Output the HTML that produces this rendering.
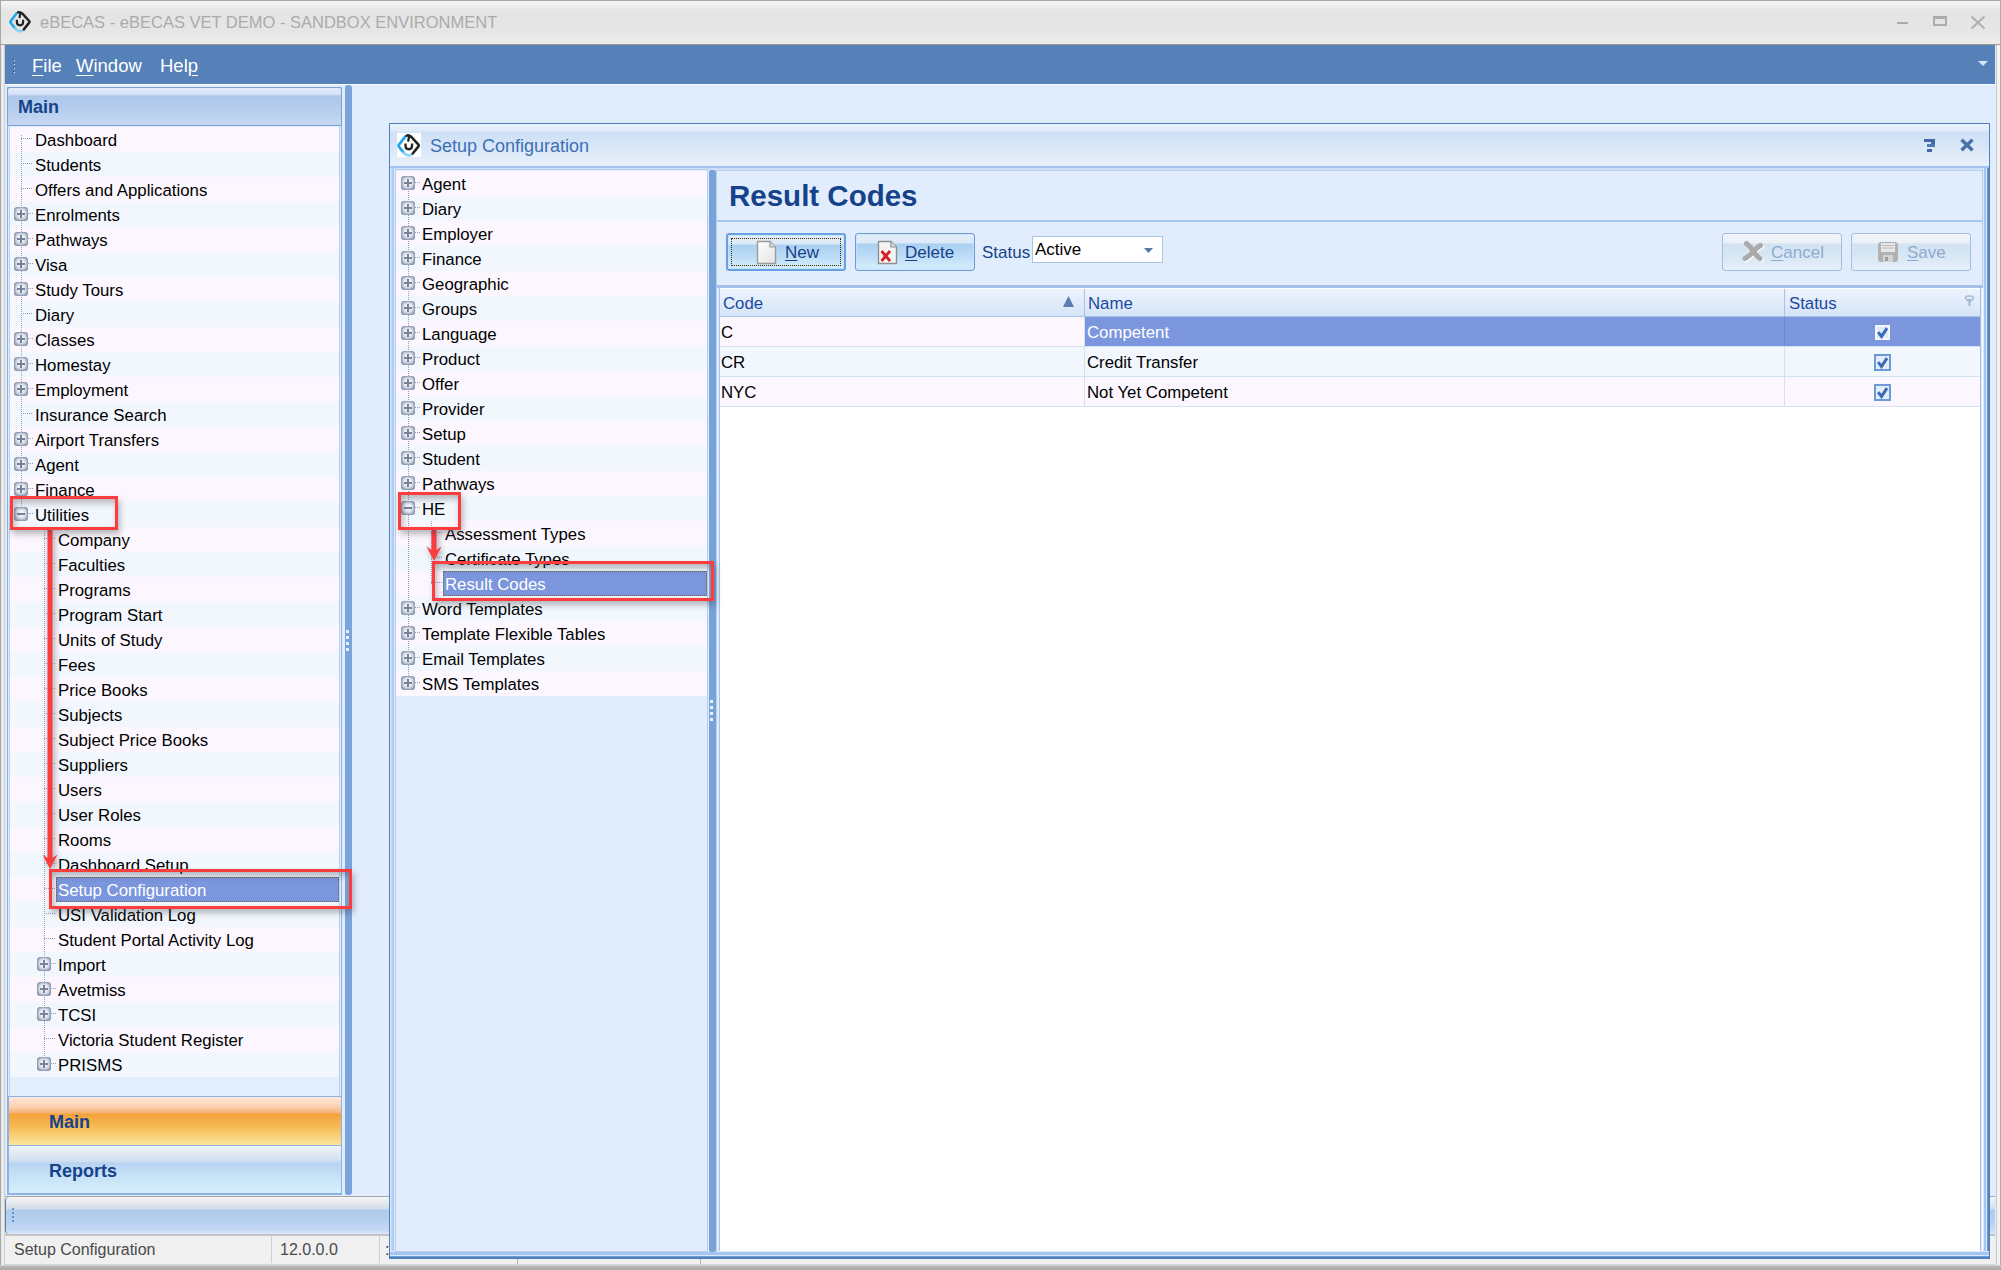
<!DOCTYPE html><html><head><meta charset="utf-8"><style>
html,body{margin:0;padding:0;width:2001px;height:1270px;overflow:hidden;font-family:"Liberation Sans", sans-serif;}
div{box-sizing:border-box}
</style></head><body>
<div style="position:absolute;left:0px;top:0px;width:2001px;height:1270px;background:#e1edfc"></div><div style="position:absolute;left:0px;top:0px;width:2001px;height:45px;background:linear-gradient(#f4f4f4,#e4e4e4 12px,#e6e6e6 30px,#ececec);border-top:1px solid #a9a9a9;box-sizing:border-box"></div><div style="position:absolute;left:0px;top:44px;width:2001px;height:1px;background:#a09a96"></div><div style="position:absolute;left:0px;top:0px;width:1px;height:1270px;background:#a8a8a8"></div><div style="position:absolute;left:1px;top:45px;width:3px;height:1225px;background:linear-gradient(to right,#dcdcdc,#f2f2f2 40%,#e6e6e6)"></div><div style="position:absolute;left:4px;top:45px;width:1px;height:1225px;background:#cfcfcf"></div><div style="position:absolute;left:1996px;top:45px;width:1px;height:1225px;background:#c8c8c8"></div><div style="position:absolute;left:1997px;top:45px;width:3px;height:1225px;background:#f2f2f2"></div><div style="position:absolute;left:2000px;top:0px;width:1px;height:1270px;background:#b0b0b0"></div><div style="position:absolute;left:0px;top:1265px;width:2001px;height:5px;background:linear-gradient(#d2d2d2,#b4b4b4 40%,#a9a9a9)"></div><svg style="position:absolute;left:6px;top:8px" width="28" height="28" viewBox="0 0 28 28">
<path d="M10.6 5.3 L4.6 13.2 Q4 14 4.6 14.8 L9.2 20.5" stroke="#1eaaea" stroke-width="2.6" fill="none" stroke-linecap="round"/>
<path d="M9.2 20.5 Q11.5 23.3 14 23.3 Q15.5 23.3 16.3 22.6" stroke="#86d0f4" stroke-width="2.4" fill="none" stroke-linecap="round"/>
<path d="M12 4.4 Q14 3.6 16.2 5.4 L23.2 13 Q23.9 13.8 23.2 14.6 L17.8 21.4" stroke="#222" stroke-width="2.5" fill="none" stroke-linecap="round"/>
<path d="M14.3 5.2 L13.6 9.2" stroke="#222" stroke-width="2.2" fill="none" stroke-linecap="round"/>
<path d="M10.9 11.8 V14 Q10.9 17.3 14 17.3 Q17.1 17.3 17.1 14 V11.8" stroke="#222" stroke-width="2.2" fill="none"/>
</svg><div style="position:absolute;left:40px;top:13px;font-size:16.5px;line-height:19px;color:#ababab;font-weight:normal;white-space:nowrap;">eBECAS - eBECAS VET DEMO - SANDBOX ENVIRONMENT</div><div style="position:absolute;left:1897px;top:22px;width:11px;height:2px;background:#a9a9a9"></div><div style="position:absolute;left:1933px;top:16px;width:14px;height:10px;border:2px solid #acacac;border-top-width:3px;box-sizing:border-box"></div><svg style="position:absolute;left:1970px;top:15px" width="16" height="15" viewBox="0 0 16 15"><path d="M1.5 1.5 L14.5 13.5 M14.5 1.5 L1.5 13.5" stroke="#b0b0b0" stroke-width="2.2"/></svg><div style="position:absolute;left:5px;top:45px;width:1990px;height:39px;background:#5580b8"></div><div style="position:absolute;left:5px;top:84px;width:1990px;height:1px;background:#f8fbff"></div><div style="position:absolute;left:14px;top:60px;width:1px;height:1px;background:#e9f0fa"></div><div style="position:absolute;left:13px;top:59px;width:1px;height:1px;background:#34598c"></div><div style="position:absolute;left:14px;top:64px;width:1px;height:1px;background:#e9f0fa"></div><div style="position:absolute;left:13px;top:63px;width:1px;height:1px;background:#34598c"></div><div style="position:absolute;left:14px;top:68px;width:1px;height:1px;background:#e9f0fa"></div><div style="position:absolute;left:13px;top:67px;width:1px;height:1px;background:#34598c"></div><div style="position:absolute;left:14px;top:72px;width:1px;height:1px;background:#e9f0fa"></div><div style="position:absolute;left:13px;top:71px;width:1px;height:1px;background:#34598c"></div><div style="position:absolute;left:32px;top:55px;font-size:18.5px;line-height:21px;color:#ffffff;font-weight:normal;white-space:nowrap;"><u style="text-decoration-thickness:1px;text-underline-offset:3px">F</u>ile</div><div style="position:absolute;left:76px;top:55px;font-size:18.5px;line-height:21px;color:#ffffff;font-weight:normal;white-space:nowrap;"><u style="text-decoration-thickness:1px;text-underline-offset:3px">W</u>indow</div><div style="position:absolute;left:160px;top:55px;font-size:18.5px;line-height:21px;color:#ffffff;font-weight:normal;white-space:nowrap;">Hel<u style="text-decoration-thickness:1px;text-underline-offset:3px">p</u></div><svg style="position:absolute;left:1978px;top:61px" width="10" height="6" viewBox="0 0 10 6"><path d="M0 0 L10 0 L5 5 Z" fill="#d6e4f7"/></svg><div style="position:absolute;left:7px;top:87px;width:335px;height:1108px;border:1px solid #8db2e3;background:#e3eefc"></div><div style="position:absolute;left:7px;top:87px;width:335px;height:39px;background:linear-gradient(#e4edf8 0px,#d5e3f5 6px,#adc7ea 8px,#b8cfee 24px,#c8daf1 38px);border:1px solid #7aa1d6;border-radius:3px 3px 0 0"></div><div style="position:absolute;left:18px;top:97px;font-size:18px;line-height:21px;color:#15428b;font-weight:bold;white-space:nowrap;">Main</div><div style="position:absolute;left:9px;top:126px;width:331px;height:970px;background:#e3eefc;border-left:1px solid #b9d1f0;border-right:1px solid #b9d1f0"></div><div style="position:absolute;left:10px;top:127px;width:329px;height:25px;background:#fcf7fe"></div><div style="position:absolute;left:10px;top:152px;width:329px;height:25px;background:#f2f7fe"></div><div style="position:absolute;left:10px;top:177px;width:329px;height:25px;background:#fcf7fe"></div><div style="position:absolute;left:10px;top:202px;width:329px;height:25px;background:#f2f7fe"></div><div style="position:absolute;left:10px;top:227px;width:329px;height:25px;background:#fcf7fe"></div><div style="position:absolute;left:10px;top:252px;width:329px;height:25px;background:#f2f7fe"></div><div style="position:absolute;left:10px;top:277px;width:329px;height:25px;background:#fcf7fe"></div><div style="position:absolute;left:10px;top:302px;width:329px;height:25px;background:#f2f7fe"></div><div style="position:absolute;left:10px;top:327px;width:329px;height:25px;background:#fcf7fe"></div><div style="position:absolute;left:10px;top:352px;width:329px;height:25px;background:#f2f7fe"></div><div style="position:absolute;left:10px;top:377px;width:329px;height:25px;background:#fcf7fe"></div><div style="position:absolute;left:10px;top:402px;width:329px;height:25px;background:#f2f7fe"></div><div style="position:absolute;left:10px;top:427px;width:329px;height:25px;background:#fcf7fe"></div><div style="position:absolute;left:10px;top:452px;width:329px;height:25px;background:#f2f7fe"></div><div style="position:absolute;left:10px;top:477px;width:329px;height:25px;background:#fcf7fe"></div><div style="position:absolute;left:10px;top:502px;width:329px;height:25px;background:#f2f7fe"></div><div style="position:absolute;left:10px;top:527px;width:329px;height:25px;background:#fcf7fe"></div><div style="position:absolute;left:10px;top:552px;width:329px;height:25px;background:#f2f7fe"></div><div style="position:absolute;left:10px;top:577px;width:329px;height:25px;background:#fcf7fe"></div><div style="position:absolute;left:10px;top:602px;width:329px;height:25px;background:#f2f7fe"></div><div style="position:absolute;left:10px;top:627px;width:329px;height:25px;background:#fcf7fe"></div><div style="position:absolute;left:10px;top:652px;width:329px;height:25px;background:#f2f7fe"></div><div style="position:absolute;left:10px;top:677px;width:329px;height:25px;background:#fcf7fe"></div><div style="position:absolute;left:10px;top:702px;width:329px;height:25px;background:#f2f7fe"></div><div style="position:absolute;left:10px;top:727px;width:329px;height:25px;background:#fcf7fe"></div><div style="position:absolute;left:10px;top:752px;width:329px;height:25px;background:#f2f7fe"></div><div style="position:absolute;left:10px;top:777px;width:329px;height:25px;background:#fcf7fe"></div><div style="position:absolute;left:10px;top:802px;width:329px;height:25px;background:#f2f7fe"></div><div style="position:absolute;left:10px;top:827px;width:329px;height:25px;background:#fcf7fe"></div><div style="position:absolute;left:10px;top:852px;width:329px;height:25px;background:#f2f7fe"></div><div style="position:absolute;left:10px;top:877px;width:329px;height:25px;background:#fcf7fe"></div><div style="position:absolute;left:10px;top:902px;width:329px;height:25px;background:#f2f7fe"></div><div style="position:absolute;left:10px;top:927px;width:329px;height:25px;background:#fcf7fe"></div><div style="position:absolute;left:10px;top:952px;width:329px;height:25px;background:#f2f7fe"></div><div style="position:absolute;left:10px;top:977px;width:329px;height:25px;background:#fcf7fe"></div><div style="position:absolute;left:10px;top:1002px;width:329px;height:25px;background:#f2f7fe"></div><div style="position:absolute;left:10px;top:1027px;width:329px;height:25px;background:#fcf7fe"></div><div style="position:absolute;left:10px;top:1052px;width:329px;height:25px;background:#f2f7fe"></div><div style="position:absolute;left:21px;top:135px;width:1px;height:379px;background:repeating-linear-gradient(to bottom,#8aa2c4 0 1px,transparent 1px 2px)"></div><div style="position:absolute;left:44px;top:527px;width:1px;height:537px;background:repeating-linear-gradient(to bottom,#8aa2c4 0 1px,transparent 1px 2px)"></div><div style="position:absolute;left:21px;top:138px;width:12px;height:1px;background:repeating-linear-gradient(to right,#8aa2c4 0 1px,transparent 1px 2px)"></div><div style="position:absolute;left:21px;top:163px;width:12px;height:1px;background:repeating-linear-gradient(to right,#8aa2c4 0 1px,transparent 1px 2px)"></div><div style="position:absolute;left:21px;top:188px;width:12px;height:1px;background:repeating-linear-gradient(to right,#8aa2c4 0 1px,transparent 1px 2px)"></div><div style="position:absolute;left:28px;top:213px;width:5px;height:1px;background:repeating-linear-gradient(to right,#8aa2c4 0 1px,transparent 1px 2px)"></div><div style="position:absolute;left:28px;top:238px;width:5px;height:1px;background:repeating-linear-gradient(to right,#8aa2c4 0 1px,transparent 1px 2px)"></div><div style="position:absolute;left:28px;top:263px;width:5px;height:1px;background:repeating-linear-gradient(to right,#8aa2c4 0 1px,transparent 1px 2px)"></div><div style="position:absolute;left:28px;top:288px;width:5px;height:1px;background:repeating-linear-gradient(to right,#8aa2c4 0 1px,transparent 1px 2px)"></div><div style="position:absolute;left:21px;top:313px;width:12px;height:1px;background:repeating-linear-gradient(to right,#8aa2c4 0 1px,transparent 1px 2px)"></div><div style="position:absolute;left:28px;top:338px;width:5px;height:1px;background:repeating-linear-gradient(to right,#8aa2c4 0 1px,transparent 1px 2px)"></div><div style="position:absolute;left:28px;top:363px;width:5px;height:1px;background:repeating-linear-gradient(to right,#8aa2c4 0 1px,transparent 1px 2px)"></div><div style="position:absolute;left:28px;top:388px;width:5px;height:1px;background:repeating-linear-gradient(to right,#8aa2c4 0 1px,transparent 1px 2px)"></div><div style="position:absolute;left:21px;top:413px;width:12px;height:1px;background:repeating-linear-gradient(to right,#8aa2c4 0 1px,transparent 1px 2px)"></div><div style="position:absolute;left:28px;top:438px;width:5px;height:1px;background:repeating-linear-gradient(to right,#8aa2c4 0 1px,transparent 1px 2px)"></div><div style="position:absolute;left:28px;top:463px;width:5px;height:1px;background:repeating-linear-gradient(to right,#8aa2c4 0 1px,transparent 1px 2px)"></div><div style="position:absolute;left:28px;top:488px;width:5px;height:1px;background:repeating-linear-gradient(to right,#8aa2c4 0 1px,transparent 1px 2px)"></div><div style="position:absolute;left:28px;top:513px;width:5px;height:1px;background:repeating-linear-gradient(to right,#8aa2c4 0 1px,transparent 1px 2px)"></div><div style="position:absolute;left:44px;top:538px;width:12px;height:1px;background:repeating-linear-gradient(to right,#8aa2c4 0 1px,transparent 1px 2px)"></div><div style="position:absolute;left:44px;top:563px;width:12px;height:1px;background:repeating-linear-gradient(to right,#8aa2c4 0 1px,transparent 1px 2px)"></div><div style="position:absolute;left:44px;top:588px;width:12px;height:1px;background:repeating-linear-gradient(to right,#8aa2c4 0 1px,transparent 1px 2px)"></div><div style="position:absolute;left:44px;top:613px;width:12px;height:1px;background:repeating-linear-gradient(to right,#8aa2c4 0 1px,transparent 1px 2px)"></div><div style="position:absolute;left:44px;top:638px;width:12px;height:1px;background:repeating-linear-gradient(to right,#8aa2c4 0 1px,transparent 1px 2px)"></div><div style="position:absolute;left:44px;top:663px;width:12px;height:1px;background:repeating-linear-gradient(to right,#8aa2c4 0 1px,transparent 1px 2px)"></div><div style="position:absolute;left:44px;top:688px;width:12px;height:1px;background:repeating-linear-gradient(to right,#8aa2c4 0 1px,transparent 1px 2px)"></div><div style="position:absolute;left:44px;top:713px;width:12px;height:1px;background:repeating-linear-gradient(to right,#8aa2c4 0 1px,transparent 1px 2px)"></div><div style="position:absolute;left:44px;top:738px;width:12px;height:1px;background:repeating-linear-gradient(to right,#8aa2c4 0 1px,transparent 1px 2px)"></div><div style="position:absolute;left:44px;top:763px;width:12px;height:1px;background:repeating-linear-gradient(to right,#8aa2c4 0 1px,transparent 1px 2px)"></div><div style="position:absolute;left:44px;top:788px;width:12px;height:1px;background:repeating-linear-gradient(to right,#8aa2c4 0 1px,transparent 1px 2px)"></div><div style="position:absolute;left:44px;top:813px;width:12px;height:1px;background:repeating-linear-gradient(to right,#8aa2c4 0 1px,transparent 1px 2px)"></div><div style="position:absolute;left:44px;top:838px;width:12px;height:1px;background:repeating-linear-gradient(to right,#8aa2c4 0 1px,transparent 1px 2px)"></div><div style="position:absolute;left:44px;top:863px;width:12px;height:1px;background:repeating-linear-gradient(to right,#8aa2c4 0 1px,transparent 1px 2px)"></div><div style="position:absolute;left:44px;top:888px;width:12px;height:1px;background:repeating-linear-gradient(to right,#8aa2c4 0 1px,transparent 1px 2px)"></div><div style="position:absolute;left:44px;top:913px;width:12px;height:1px;background:repeating-linear-gradient(to right,#8aa2c4 0 1px,transparent 1px 2px)"></div><div style="position:absolute;left:44px;top:938px;width:12px;height:1px;background:repeating-linear-gradient(to right,#8aa2c4 0 1px,transparent 1px 2px)"></div><div style="position:absolute;left:51px;top:963px;width:5px;height:1px;background:repeating-linear-gradient(to right,#8aa2c4 0 1px,transparent 1px 2px)"></div><div style="position:absolute;left:51px;top:988px;width:5px;height:1px;background:repeating-linear-gradient(to right,#8aa2c4 0 1px,transparent 1px 2px)"></div><div style="position:absolute;left:51px;top:1013px;width:5px;height:1px;background:repeating-linear-gradient(to right,#8aa2c4 0 1px,transparent 1px 2px)"></div><div style="position:absolute;left:44px;top:1038px;width:12px;height:1px;background:repeating-linear-gradient(to right,#8aa2c4 0 1px,transparent 1px 2px)"></div><div style="position:absolute;left:51px;top:1063px;width:5px;height:1px;background:repeating-linear-gradient(to right,#8aa2c4 0 1px,transparent 1px 2px)"></div><div style="position:absolute;left:35px;top:131px;font-size:16.8px;line-height:19px;color:#000;font-weight:normal;white-space:nowrap;">Dashboard</div><div style="position:absolute;left:35px;top:156px;font-size:16.8px;line-height:19px;color:#000;font-weight:normal;white-space:nowrap;">Students</div><div style="position:absolute;left:35px;top:181px;font-size:16.8px;line-height:19px;color:#000;font-weight:normal;white-space:nowrap;">Offers and Applications</div><div style="position:absolute;left:14px;top:207px;width:14px;height:14px;border-radius:3.5px;background:radial-gradient(ellipse at 50% 45%,#f3f5f9 22%,#d9dee8 52%,#a6b0c2 82%,#8f9ab0 100%);box-shadow:inset 0 0 2.5px 1px rgba(118,130,156,0.85)"><div style="position:absolute;left:3px;top:6px;width:8px;height:2px;background:#76839a"></div><div style="position:absolute;left:6px;top:3px;width:2px;height:8px;background:#76839a"></div></div><div style="position:absolute;left:35px;top:206px;font-size:16.8px;line-height:19px;color:#000;font-weight:normal;white-space:nowrap;">Enrolments</div><div style="position:absolute;left:14px;top:232px;width:14px;height:14px;border-radius:3.5px;background:radial-gradient(ellipse at 50% 45%,#f3f5f9 22%,#d9dee8 52%,#a6b0c2 82%,#8f9ab0 100%);box-shadow:inset 0 0 2.5px 1px rgba(118,130,156,0.85)"><div style="position:absolute;left:3px;top:6px;width:8px;height:2px;background:#76839a"></div><div style="position:absolute;left:6px;top:3px;width:2px;height:8px;background:#76839a"></div></div><div style="position:absolute;left:35px;top:231px;font-size:16.8px;line-height:19px;color:#000;font-weight:normal;white-space:nowrap;">Pathways</div><div style="position:absolute;left:14px;top:257px;width:14px;height:14px;border-radius:3.5px;background:radial-gradient(ellipse at 50% 45%,#f3f5f9 22%,#d9dee8 52%,#a6b0c2 82%,#8f9ab0 100%);box-shadow:inset 0 0 2.5px 1px rgba(118,130,156,0.85)"><div style="position:absolute;left:3px;top:6px;width:8px;height:2px;background:#76839a"></div><div style="position:absolute;left:6px;top:3px;width:2px;height:8px;background:#76839a"></div></div><div style="position:absolute;left:35px;top:256px;font-size:16.8px;line-height:19px;color:#000;font-weight:normal;white-space:nowrap;">Visa</div><div style="position:absolute;left:14px;top:282px;width:14px;height:14px;border-radius:3.5px;background:radial-gradient(ellipse at 50% 45%,#f3f5f9 22%,#d9dee8 52%,#a6b0c2 82%,#8f9ab0 100%);box-shadow:inset 0 0 2.5px 1px rgba(118,130,156,0.85)"><div style="position:absolute;left:3px;top:6px;width:8px;height:2px;background:#76839a"></div><div style="position:absolute;left:6px;top:3px;width:2px;height:8px;background:#76839a"></div></div><div style="position:absolute;left:35px;top:281px;font-size:16.8px;line-height:19px;color:#000;font-weight:normal;white-space:nowrap;">Study Tours</div><div style="position:absolute;left:35px;top:306px;font-size:16.8px;line-height:19px;color:#000;font-weight:normal;white-space:nowrap;">Diary</div><div style="position:absolute;left:14px;top:332px;width:14px;height:14px;border-radius:3.5px;background:radial-gradient(ellipse at 50% 45%,#f3f5f9 22%,#d9dee8 52%,#a6b0c2 82%,#8f9ab0 100%);box-shadow:inset 0 0 2.5px 1px rgba(118,130,156,0.85)"><div style="position:absolute;left:3px;top:6px;width:8px;height:2px;background:#76839a"></div><div style="position:absolute;left:6px;top:3px;width:2px;height:8px;background:#76839a"></div></div><div style="position:absolute;left:35px;top:331px;font-size:16.8px;line-height:19px;color:#000;font-weight:normal;white-space:nowrap;">Classes</div><div style="position:absolute;left:14px;top:357px;width:14px;height:14px;border-radius:3.5px;background:radial-gradient(ellipse at 50% 45%,#f3f5f9 22%,#d9dee8 52%,#a6b0c2 82%,#8f9ab0 100%);box-shadow:inset 0 0 2.5px 1px rgba(118,130,156,0.85)"><div style="position:absolute;left:3px;top:6px;width:8px;height:2px;background:#76839a"></div><div style="position:absolute;left:6px;top:3px;width:2px;height:8px;background:#76839a"></div></div><div style="position:absolute;left:35px;top:356px;font-size:16.8px;line-height:19px;color:#000;font-weight:normal;white-space:nowrap;">Homestay</div><div style="position:absolute;left:14px;top:382px;width:14px;height:14px;border-radius:3.5px;background:radial-gradient(ellipse at 50% 45%,#f3f5f9 22%,#d9dee8 52%,#a6b0c2 82%,#8f9ab0 100%);box-shadow:inset 0 0 2.5px 1px rgba(118,130,156,0.85)"><div style="position:absolute;left:3px;top:6px;width:8px;height:2px;background:#76839a"></div><div style="position:absolute;left:6px;top:3px;width:2px;height:8px;background:#76839a"></div></div><div style="position:absolute;left:35px;top:381px;font-size:16.8px;line-height:19px;color:#000;font-weight:normal;white-space:nowrap;">Employment</div><div style="position:absolute;left:35px;top:406px;font-size:16.8px;line-height:19px;color:#000;font-weight:normal;white-space:nowrap;">Insurance Search</div><div style="position:absolute;left:14px;top:432px;width:14px;height:14px;border-radius:3.5px;background:radial-gradient(ellipse at 50% 45%,#f3f5f9 22%,#d9dee8 52%,#a6b0c2 82%,#8f9ab0 100%);box-shadow:inset 0 0 2.5px 1px rgba(118,130,156,0.85)"><div style="position:absolute;left:3px;top:6px;width:8px;height:2px;background:#76839a"></div><div style="position:absolute;left:6px;top:3px;width:2px;height:8px;background:#76839a"></div></div><div style="position:absolute;left:35px;top:431px;font-size:16.8px;line-height:19px;color:#000;font-weight:normal;white-space:nowrap;">Airport Transfers</div><div style="position:absolute;left:14px;top:457px;width:14px;height:14px;border-radius:3.5px;background:radial-gradient(ellipse at 50% 45%,#f3f5f9 22%,#d9dee8 52%,#a6b0c2 82%,#8f9ab0 100%);box-shadow:inset 0 0 2.5px 1px rgba(118,130,156,0.85)"><div style="position:absolute;left:3px;top:6px;width:8px;height:2px;background:#76839a"></div><div style="position:absolute;left:6px;top:3px;width:2px;height:8px;background:#76839a"></div></div><div style="position:absolute;left:35px;top:456px;font-size:16.8px;line-height:19px;color:#000;font-weight:normal;white-space:nowrap;">Agent</div><div style="position:absolute;left:14px;top:482px;width:14px;height:14px;border-radius:3.5px;background:radial-gradient(ellipse at 50% 45%,#f3f5f9 22%,#d9dee8 52%,#a6b0c2 82%,#8f9ab0 100%);box-shadow:inset 0 0 2.5px 1px rgba(118,130,156,0.85)"><div style="position:absolute;left:3px;top:6px;width:8px;height:2px;background:#76839a"></div><div style="position:absolute;left:6px;top:3px;width:2px;height:8px;background:#76839a"></div></div><div style="position:absolute;left:35px;top:481px;font-size:16.8px;line-height:19px;color:#000;font-weight:normal;white-space:nowrap;">Finance</div><div style="position:absolute;left:14px;top:507px;width:14px;height:14px;border-radius:3.5px;background:radial-gradient(ellipse at 50% 45%,#f3f5f9 22%,#d9dee8 52%,#a6b0c2 82%,#8f9ab0 100%);box-shadow:inset 0 0 2.5px 1px rgba(118,130,156,0.85)"><div style="position:absolute;left:3px;top:6px;width:8px;height:2px;background:#76839a"></div></div><div style="position:absolute;left:35px;top:506px;font-size:16.8px;line-height:19px;color:#000;font-weight:normal;white-space:nowrap;">Utilities</div><div style="position:absolute;left:58px;top:531px;font-size:16.8px;line-height:19px;color:#000;font-weight:normal;white-space:nowrap;">Company</div><div style="position:absolute;left:58px;top:556px;font-size:16.8px;line-height:19px;color:#000;font-weight:normal;white-space:nowrap;">Faculties</div><div style="position:absolute;left:58px;top:581px;font-size:16.8px;line-height:19px;color:#000;font-weight:normal;white-space:nowrap;">Programs</div><div style="position:absolute;left:58px;top:606px;font-size:16.8px;line-height:19px;color:#000;font-weight:normal;white-space:nowrap;">Program Start</div><div style="position:absolute;left:58px;top:631px;font-size:16.8px;line-height:19px;color:#000;font-weight:normal;white-space:nowrap;">Units of Study</div><div style="position:absolute;left:58px;top:656px;font-size:16.8px;line-height:19px;color:#000;font-weight:normal;white-space:nowrap;">Fees</div><div style="position:absolute;left:58px;top:681px;font-size:16.8px;line-height:19px;color:#000;font-weight:normal;white-space:nowrap;">Price Books</div><div style="position:absolute;left:58px;top:706px;font-size:16.8px;line-height:19px;color:#000;font-weight:normal;white-space:nowrap;">Subjects</div><div style="position:absolute;left:58px;top:731px;font-size:16.8px;line-height:19px;color:#000;font-weight:normal;white-space:nowrap;">Subject Price Books</div><div style="position:absolute;left:58px;top:756px;font-size:16.8px;line-height:19px;color:#000;font-weight:normal;white-space:nowrap;">Suppliers</div><div style="position:absolute;left:58px;top:781px;font-size:16.8px;line-height:19px;color:#000;font-weight:normal;white-space:nowrap;">Users</div><div style="position:absolute;left:58px;top:806px;font-size:16.8px;line-height:19px;color:#000;font-weight:normal;white-space:nowrap;">User Roles</div><div style="position:absolute;left:58px;top:831px;font-size:16.8px;line-height:19px;color:#000;font-weight:normal;white-space:nowrap;">Rooms</div><div style="position:absolute;left:58px;top:856px;font-size:16.8px;line-height:19px;color:#000;font-weight:normal;white-space:nowrap;">Dashboard Setup</div><div style="position:absolute;left:56px;top:877px;width:283px;height:25px;background:#7b96dc;border:1px dotted #6e6238"></div><div style="position:absolute;left:58px;top:881px;font-size:16.8px;line-height:19px;color:#ffffff;font-weight:normal;white-space:nowrap;">Setup Configuration</div><div style="position:absolute;left:58px;top:906px;font-size:16.8px;line-height:19px;color:#000;font-weight:normal;white-space:nowrap;">USI Validation Log</div><div style="position:absolute;left:58px;top:931px;font-size:16.8px;line-height:19px;color:#000;font-weight:normal;white-space:nowrap;">Student Portal Activity Log</div><div style="position:absolute;left:37px;top:957px;width:14px;height:14px;border-radius:3.5px;background:radial-gradient(ellipse at 50% 45%,#f3f5f9 22%,#d9dee8 52%,#a6b0c2 82%,#8f9ab0 100%);box-shadow:inset 0 0 2.5px 1px rgba(118,130,156,0.85)"><div style="position:absolute;left:3px;top:6px;width:8px;height:2px;background:#76839a"></div><div style="position:absolute;left:6px;top:3px;width:2px;height:8px;background:#76839a"></div></div><div style="position:absolute;left:58px;top:956px;font-size:16.8px;line-height:19px;color:#000;font-weight:normal;white-space:nowrap;">Import</div><div style="position:absolute;left:37px;top:982px;width:14px;height:14px;border-radius:3.5px;background:radial-gradient(ellipse at 50% 45%,#f3f5f9 22%,#d9dee8 52%,#a6b0c2 82%,#8f9ab0 100%);box-shadow:inset 0 0 2.5px 1px rgba(118,130,156,0.85)"><div style="position:absolute;left:3px;top:6px;width:8px;height:2px;background:#76839a"></div><div style="position:absolute;left:6px;top:3px;width:2px;height:8px;background:#76839a"></div></div><div style="position:absolute;left:58px;top:981px;font-size:16.8px;line-height:19px;color:#000;font-weight:normal;white-space:nowrap;">Avetmiss</div><div style="position:absolute;left:37px;top:1007px;width:14px;height:14px;border-radius:3.5px;background:radial-gradient(ellipse at 50% 45%,#f3f5f9 22%,#d9dee8 52%,#a6b0c2 82%,#8f9ab0 100%);box-shadow:inset 0 0 2.5px 1px rgba(118,130,156,0.85)"><div style="position:absolute;left:3px;top:6px;width:8px;height:2px;background:#76839a"></div><div style="position:absolute;left:6px;top:3px;width:2px;height:8px;background:#76839a"></div></div><div style="position:absolute;left:58px;top:1006px;font-size:16.8px;line-height:19px;color:#000;font-weight:normal;white-space:nowrap;">TCSI</div><div style="position:absolute;left:58px;top:1031px;font-size:16.8px;line-height:19px;color:#000;font-weight:normal;white-space:nowrap;">Victoria Student Register</div><div style="position:absolute;left:37px;top:1057px;width:14px;height:14px;border-radius:3.5px;background:radial-gradient(ellipse at 50% 45%,#f3f5f9 22%,#d9dee8 52%,#a6b0c2 82%,#8f9ab0 100%);box-shadow:inset 0 0 2.5px 1px rgba(118,130,156,0.85)"><div style="position:absolute;left:3px;top:6px;width:8px;height:2px;background:#76839a"></div><div style="position:absolute;left:6px;top:3px;width:2px;height:8px;background:#76839a"></div></div><div style="position:absolute;left:58px;top:1056px;font-size:16.8px;line-height:19px;color:#000;font-weight:normal;white-space:nowrap;">PRISMS</div><div style="position:absolute;left:8px;top:1096px;width:334px;height:1px;background:#8db2e3"></div><div style="position:absolute;left:8px;top:1097px;width:334px;height:48px;background:linear-gradient(#fde8da 0px,#fbd0b0 10px,#f7b171 16px,#f4a13a 17px,#f7bb55 30px,#fbe39a 47px);border-left:1px solid #8db2e3;border-right:1px solid #8db2e3"></div><div style="position:absolute;left:49px;top:1112px;font-size:18px;line-height:21px;color:#15428b;font-weight:bold;white-space:nowrap;">Main</div><div style="position:absolute;left:8px;top:1145px;width:334px;height:1px;background:#8db2e3"></div><div style="position:absolute;left:8px;top:1146px;width:334px;height:48px;background:linear-gradient(#f1f5fa 0px,#dbe6f3 10px,#cdddf1 16px,#b6d3f2 17px,#c6e2f7 30px,#d6effc 47px);border-left:1px solid #8db2e3;border-right:1px solid #8db2e3"></div><div style="position:absolute;left:49px;top:1161px;font-size:18px;line-height:21px;color:#15428b;font-weight:bold;white-space:nowrap;">Reports</div><div style="position:absolute;left:8px;top:1193px;width:334px;height:1px;background:#8db2e3"></div><div style="position:absolute;left:345px;top:85px;width:7px;height:1110px;background:#7aa3db;border-radius:3px"></div><div style="position:absolute;left:346px;top:630px;width:3px;height:3px;background:#e6effb"></div><div style="position:absolute;left:346px;top:636px;width:3px;height:3px;background:#e6effb"></div><div style="position:absolute;left:346px;top:642px;width:3px;height:3px;background:#e6effb"></div><div style="position:absolute;left:346px;top:648px;width:3px;height:3px;background:#e6effb"></div><div style="position:absolute;left:5px;top:1196px;width:1990px;height:1px;background:#a6a6a6"></div><div style="position:absolute;left:5px;top:1197px;width:1990px;height:37px;background:linear-gradient(#f5f5f7 0px,#e6e9ee 6px,#d2dce9 12px,#aecbec 13px,#b4cfee 22px,#c4d8f3 33px,#dce8f8 37px);border-radius:4px 0 0 4px;border-left:1px solid #5b7fb0"></div><div style="position:absolute;left:12px;top:1208px;width:2px;height:2px;background:#6a90c6"></div><div style="position:absolute;left:12px;top:1212px;width:2px;height:2px;background:#6a90c6"></div><div style="position:absolute;left:12px;top:1216px;width:2px;height:2px;background:#6a90c6"></div><div style="position:absolute;left:12px;top:1220px;width:2px;height:2px;background:#6a90c6"></div><div style="position:absolute;left:5px;top:1234px;width:1990px;height:2px;background:#c5c5c5"></div><div style="position:absolute;left:5px;top:1236px;width:1990px;height:29px;background:#f0f0f0"></div><div style="position:absolute;left:14px;top:1241px;font-size:16px;line-height:18px;color:#4a4a4a;font-weight:normal;white-space:nowrap;">Setup Configuration</div><div style="position:absolute;left:271px;top:1236px;width:1px;height:27px;background:#cfcfcf"></div><div style="position:absolute;left:280px;top:1241px;font-size:16px;line-height:18px;color:#4a4a4a;font-weight:normal;white-space:nowrap;">12.0.0.0</div><div style="position:absolute;left:379px;top:1236px;width:1px;height:27px;background:#cfcfcf"></div><div style="position:absolute;left:385px;top:1241px;font-size:16px;line-height:18px;color:#3b3b3b;font-weight:normal;white-space:nowrap;">:</div><div style="position:absolute;left:517px;top:1258px;width:1px;height:6px;background:#b5b5b5"></div><div style="position:absolute;left:700px;top:1258px;width:1px;height:6px;background:#b5b5b5"></div><div style="position:absolute;left:5px;top:1264px;width:1990px;height:1px;background:#d8d8d8"></div><div style="position:absolute;left:389px;top:123px;width:1601px;height:1136px;background:#e1edfc;border:1px solid #4e7fbf"></div><div style="position:absolute;left:390px;top:124px;width:1599px;height:44px;background:linear-gradient(#eaf2fc 0px,#e2edfb 6px,#cfe1f6 9px,#d6e5f7 20px,#e4eefb 36px,#ebf1fb 43px)"></div><div style="position:absolute;left:397px;top:133px;width:24px;height:24px;background:#ffffff"></div><svg style="position:absolute;left:393.5px;top:130.5px" width="29.5" height="29.5" viewBox="0 0 28 28">
<path d="M10.6 5.3 L4.6 13.2 Q4 14 4.6 14.8 L9.2 20.5" stroke="#1eaaea" stroke-width="2.6" fill="none" stroke-linecap="round"/>
<path d="M9.2 20.5 Q11.5 23.3 14 23.3 Q15.5 23.3 16.3 22.6" stroke="#86d0f4" stroke-width="2.4" fill="none" stroke-linecap="round"/>
<path d="M12 4.4 Q14 3.6 16.2 5.4 L23.2 13 Q23.9 13.8 23.2 14.6 L17.8 21.4" stroke="#222" stroke-width="2.5" fill="none" stroke-linecap="round"/>
<path d="M14.3 5.2 L13.6 9.2" stroke="#222" stroke-width="2.2" fill="none" stroke-linecap="round"/>
<path d="M10.9 11.8 V14 Q10.9 17.3 14 17.3 Q17.1 17.3 17.1 14 V11.8" stroke="#222" stroke-width="2.2" fill="none"/>
</svg><div style="position:absolute;left:430px;top:136px;font-size:18px;line-height:21px;color:#3c6fb6;font-weight:normal;white-space:nowrap;">Setup Configuration</div><div style="position:absolute;left:1924px;top:139px;width:11px;height:3px;background:#3f6aa6"></div><div style="position:absolute;left:1931px;top:139px;width:4px;height:8px;background:#3f6aa6"></div><div style="position:absolute;left:1927px;top:144px;width:8px;height:3px;background:#5079b2"></div><div style="position:absolute;left:1927px;top:149px;width:5px;height:3px;background:#3f6aa6"></div><svg style="position:absolute;left:1959px;top:138px" width="16" height="14" viewBox="0 0 16 14"><path d="M2.5 1.8 L13.5 12.2 M13.5 1.8 L2.5 12.2" stroke="#4a70a8" stroke-width="3.4"/></svg><div style="position:absolute;left:390px;top:166px;width:1599px;height:2px;background:#a4c3ec"></div><div style="position:absolute;left:390px;top:168px;width:1599px;height:2px;background:#cfe0f6"></div><div style="position:absolute;left:390px;top:168px;width:5px;height:1090px;background:linear-gradient(to right,#dfeafb 0 1px,#c0d8f4 1px,#a6c6ef 4px,#e1edfc 4px)"></div><div style="position:absolute;left:1983px;top:168px;width:6px;height:1090px;background:linear-gradient(to right,#dbe8f9 0 1px,#a6c5ee 1px 3px,#d7e6f8 3px 4px,#7fa6d8 4px,#4276b8 6px)"></div><div style="position:absolute;left:390px;top:1251px;width:1599px;height:7px;background:linear-gradient(#dbe8f9 0 1px,#a6c5ee 1px 4px,#dbe8f9 4px 5px,#7fa6d8 5px,#4276b8 7px)"></div><div style="position:absolute;left:395px;top:169px;width:313px;height:1083px;background:#e1edfc;border:1px solid #b6cdec"></div><div style="position:absolute;left:396px;top:171px;width:311px;height:25px;background:#fcf7fe"></div><div style="position:absolute;left:396px;top:196px;width:311px;height:25px;background:#f2f7fe"></div><div style="position:absolute;left:396px;top:221px;width:311px;height:25px;background:#fcf7fe"></div><div style="position:absolute;left:396px;top:246px;width:311px;height:25px;background:#f2f7fe"></div><div style="position:absolute;left:396px;top:271px;width:311px;height:25px;background:#fcf7fe"></div><div style="position:absolute;left:396px;top:296px;width:311px;height:25px;background:#f2f7fe"></div><div style="position:absolute;left:396px;top:321px;width:311px;height:25px;background:#fcf7fe"></div><div style="position:absolute;left:396px;top:346px;width:311px;height:25px;background:#f2f7fe"></div><div style="position:absolute;left:396px;top:371px;width:311px;height:25px;background:#fcf7fe"></div><div style="position:absolute;left:396px;top:396px;width:311px;height:25px;background:#f2f7fe"></div><div style="position:absolute;left:396px;top:421px;width:311px;height:25px;background:#fcf7fe"></div><div style="position:absolute;left:396px;top:446px;width:311px;height:25px;background:#f2f7fe"></div><div style="position:absolute;left:396px;top:471px;width:311px;height:25px;background:#fcf7fe"></div><div style="position:absolute;left:396px;top:496px;width:311px;height:25px;background:#f2f7fe"></div><div style="position:absolute;left:396px;top:521px;width:311px;height:25px;background:#fcf7fe"></div><div style="position:absolute;left:396px;top:546px;width:311px;height:25px;background:#f2f7fe"></div><div style="position:absolute;left:396px;top:571px;width:311px;height:25px;background:#fcf7fe"></div><div style="position:absolute;left:396px;top:596px;width:311px;height:25px;background:#f2f7fe"></div><div style="position:absolute;left:396px;top:621px;width:311px;height:25px;background:#fcf7fe"></div><div style="position:absolute;left:396px;top:646px;width:311px;height:25px;background:#f2f7fe"></div><div style="position:absolute;left:396px;top:671px;width:311px;height:25px;background:#fcf7fe"></div><div style="position:absolute;left:408px;top:179px;width:1px;height:505px;background:repeating-linear-gradient(to bottom,#8aa2c4 0 1px,transparent 1px 2px)"></div><div style="position:absolute;left:431px;top:521px;width:1px;height:63px;background:repeating-linear-gradient(to bottom,#8aa2c4 0 1px,transparent 1px 2px)"></div><div style="position:absolute;left:415px;top:182px;width:5px;height:1px;background:repeating-linear-gradient(to right,#8aa2c4 0 1px,transparent 1px 2px)"></div><div style="position:absolute;left:415px;top:207px;width:5px;height:1px;background:repeating-linear-gradient(to right,#8aa2c4 0 1px,transparent 1px 2px)"></div><div style="position:absolute;left:415px;top:232px;width:5px;height:1px;background:repeating-linear-gradient(to right,#8aa2c4 0 1px,transparent 1px 2px)"></div><div style="position:absolute;left:415px;top:257px;width:5px;height:1px;background:repeating-linear-gradient(to right,#8aa2c4 0 1px,transparent 1px 2px)"></div><div style="position:absolute;left:415px;top:282px;width:5px;height:1px;background:repeating-linear-gradient(to right,#8aa2c4 0 1px,transparent 1px 2px)"></div><div style="position:absolute;left:415px;top:307px;width:5px;height:1px;background:repeating-linear-gradient(to right,#8aa2c4 0 1px,transparent 1px 2px)"></div><div style="position:absolute;left:415px;top:332px;width:5px;height:1px;background:repeating-linear-gradient(to right,#8aa2c4 0 1px,transparent 1px 2px)"></div><div style="position:absolute;left:415px;top:357px;width:5px;height:1px;background:repeating-linear-gradient(to right,#8aa2c4 0 1px,transparent 1px 2px)"></div><div style="position:absolute;left:415px;top:382px;width:5px;height:1px;background:repeating-linear-gradient(to right,#8aa2c4 0 1px,transparent 1px 2px)"></div><div style="position:absolute;left:415px;top:407px;width:5px;height:1px;background:repeating-linear-gradient(to right,#8aa2c4 0 1px,transparent 1px 2px)"></div><div style="position:absolute;left:415px;top:432px;width:5px;height:1px;background:repeating-linear-gradient(to right,#8aa2c4 0 1px,transparent 1px 2px)"></div><div style="position:absolute;left:415px;top:457px;width:5px;height:1px;background:repeating-linear-gradient(to right,#8aa2c4 0 1px,transparent 1px 2px)"></div><div style="position:absolute;left:415px;top:482px;width:5px;height:1px;background:repeating-linear-gradient(to right,#8aa2c4 0 1px,transparent 1px 2px)"></div><div style="position:absolute;left:415px;top:507px;width:5px;height:1px;background:repeating-linear-gradient(to right,#8aa2c4 0 1px,transparent 1px 2px)"></div><div style="position:absolute;left:431px;top:532px;width:12px;height:1px;background:repeating-linear-gradient(to right,#8aa2c4 0 1px,transparent 1px 2px)"></div><div style="position:absolute;left:431px;top:557px;width:12px;height:1px;background:repeating-linear-gradient(to right,#8aa2c4 0 1px,transparent 1px 2px)"></div><div style="position:absolute;left:431px;top:582px;width:12px;height:1px;background:repeating-linear-gradient(to right,#8aa2c4 0 1px,transparent 1px 2px)"></div><div style="position:absolute;left:415px;top:607px;width:5px;height:1px;background:repeating-linear-gradient(to right,#8aa2c4 0 1px,transparent 1px 2px)"></div><div style="position:absolute;left:415px;top:632px;width:5px;height:1px;background:repeating-linear-gradient(to right,#8aa2c4 0 1px,transparent 1px 2px)"></div><div style="position:absolute;left:415px;top:657px;width:5px;height:1px;background:repeating-linear-gradient(to right,#8aa2c4 0 1px,transparent 1px 2px)"></div><div style="position:absolute;left:415px;top:682px;width:5px;height:1px;background:repeating-linear-gradient(to right,#8aa2c4 0 1px,transparent 1px 2px)"></div><div style="position:absolute;left:401px;top:176px;width:14px;height:14px;border-radius:3.5px;background:radial-gradient(ellipse at 50% 45%,#f3f5f9 22%,#d9dee8 52%,#a6b0c2 82%,#8f9ab0 100%);box-shadow:inset 0 0 2.5px 1px rgba(118,130,156,0.85)"><div style="position:absolute;left:3px;top:6px;width:8px;height:2px;background:#76839a"></div><div style="position:absolute;left:6px;top:3px;width:2px;height:8px;background:#76839a"></div></div><div style="position:absolute;left:422px;top:175px;font-size:16.8px;line-height:19px;color:#000;font-weight:normal;white-space:nowrap;">Agent</div><div style="position:absolute;left:401px;top:201px;width:14px;height:14px;border-radius:3.5px;background:radial-gradient(ellipse at 50% 45%,#f3f5f9 22%,#d9dee8 52%,#a6b0c2 82%,#8f9ab0 100%);box-shadow:inset 0 0 2.5px 1px rgba(118,130,156,0.85)"><div style="position:absolute;left:3px;top:6px;width:8px;height:2px;background:#76839a"></div><div style="position:absolute;left:6px;top:3px;width:2px;height:8px;background:#76839a"></div></div><div style="position:absolute;left:422px;top:200px;font-size:16.8px;line-height:19px;color:#000;font-weight:normal;white-space:nowrap;">Diary</div><div style="position:absolute;left:401px;top:226px;width:14px;height:14px;border-radius:3.5px;background:radial-gradient(ellipse at 50% 45%,#f3f5f9 22%,#d9dee8 52%,#a6b0c2 82%,#8f9ab0 100%);box-shadow:inset 0 0 2.5px 1px rgba(118,130,156,0.85)"><div style="position:absolute;left:3px;top:6px;width:8px;height:2px;background:#76839a"></div><div style="position:absolute;left:6px;top:3px;width:2px;height:8px;background:#76839a"></div></div><div style="position:absolute;left:422px;top:225px;font-size:16.8px;line-height:19px;color:#000;font-weight:normal;white-space:nowrap;">Employer</div><div style="position:absolute;left:401px;top:251px;width:14px;height:14px;border-radius:3.5px;background:radial-gradient(ellipse at 50% 45%,#f3f5f9 22%,#d9dee8 52%,#a6b0c2 82%,#8f9ab0 100%);box-shadow:inset 0 0 2.5px 1px rgba(118,130,156,0.85)"><div style="position:absolute;left:3px;top:6px;width:8px;height:2px;background:#76839a"></div><div style="position:absolute;left:6px;top:3px;width:2px;height:8px;background:#76839a"></div></div><div style="position:absolute;left:422px;top:250px;font-size:16.8px;line-height:19px;color:#000;font-weight:normal;white-space:nowrap;">Finance</div><div style="position:absolute;left:401px;top:276px;width:14px;height:14px;border-radius:3.5px;background:radial-gradient(ellipse at 50% 45%,#f3f5f9 22%,#d9dee8 52%,#a6b0c2 82%,#8f9ab0 100%);box-shadow:inset 0 0 2.5px 1px rgba(118,130,156,0.85)"><div style="position:absolute;left:3px;top:6px;width:8px;height:2px;background:#76839a"></div><div style="position:absolute;left:6px;top:3px;width:2px;height:8px;background:#76839a"></div></div><div style="position:absolute;left:422px;top:275px;font-size:16.8px;line-height:19px;color:#000;font-weight:normal;white-space:nowrap;">Geographic</div><div style="position:absolute;left:401px;top:301px;width:14px;height:14px;border-radius:3.5px;background:radial-gradient(ellipse at 50% 45%,#f3f5f9 22%,#d9dee8 52%,#a6b0c2 82%,#8f9ab0 100%);box-shadow:inset 0 0 2.5px 1px rgba(118,130,156,0.85)"><div style="position:absolute;left:3px;top:6px;width:8px;height:2px;background:#76839a"></div><div style="position:absolute;left:6px;top:3px;width:2px;height:8px;background:#76839a"></div></div><div style="position:absolute;left:422px;top:300px;font-size:16.8px;line-height:19px;color:#000;font-weight:normal;white-space:nowrap;">Groups</div><div style="position:absolute;left:401px;top:326px;width:14px;height:14px;border-radius:3.5px;background:radial-gradient(ellipse at 50% 45%,#f3f5f9 22%,#d9dee8 52%,#a6b0c2 82%,#8f9ab0 100%);box-shadow:inset 0 0 2.5px 1px rgba(118,130,156,0.85)"><div style="position:absolute;left:3px;top:6px;width:8px;height:2px;background:#76839a"></div><div style="position:absolute;left:6px;top:3px;width:2px;height:8px;background:#76839a"></div></div><div style="position:absolute;left:422px;top:325px;font-size:16.8px;line-height:19px;color:#000;font-weight:normal;white-space:nowrap;">Language</div><div style="position:absolute;left:401px;top:351px;width:14px;height:14px;border-radius:3.5px;background:radial-gradient(ellipse at 50% 45%,#f3f5f9 22%,#d9dee8 52%,#a6b0c2 82%,#8f9ab0 100%);box-shadow:inset 0 0 2.5px 1px rgba(118,130,156,0.85)"><div style="position:absolute;left:3px;top:6px;width:8px;height:2px;background:#76839a"></div><div style="position:absolute;left:6px;top:3px;width:2px;height:8px;background:#76839a"></div></div><div style="position:absolute;left:422px;top:350px;font-size:16.8px;line-height:19px;color:#000;font-weight:normal;white-space:nowrap;">Product</div><div style="position:absolute;left:401px;top:376px;width:14px;height:14px;border-radius:3.5px;background:radial-gradient(ellipse at 50% 45%,#f3f5f9 22%,#d9dee8 52%,#a6b0c2 82%,#8f9ab0 100%);box-shadow:inset 0 0 2.5px 1px rgba(118,130,156,0.85)"><div style="position:absolute;left:3px;top:6px;width:8px;height:2px;background:#76839a"></div><div style="position:absolute;left:6px;top:3px;width:2px;height:8px;background:#76839a"></div></div><div style="position:absolute;left:422px;top:375px;font-size:16.8px;line-height:19px;color:#000;font-weight:normal;white-space:nowrap;">Offer</div><div style="position:absolute;left:401px;top:401px;width:14px;height:14px;border-radius:3.5px;background:radial-gradient(ellipse at 50% 45%,#f3f5f9 22%,#d9dee8 52%,#a6b0c2 82%,#8f9ab0 100%);box-shadow:inset 0 0 2.5px 1px rgba(118,130,156,0.85)"><div style="position:absolute;left:3px;top:6px;width:8px;height:2px;background:#76839a"></div><div style="position:absolute;left:6px;top:3px;width:2px;height:8px;background:#76839a"></div></div><div style="position:absolute;left:422px;top:400px;font-size:16.8px;line-height:19px;color:#000;font-weight:normal;white-space:nowrap;">Provider</div><div style="position:absolute;left:401px;top:426px;width:14px;height:14px;border-radius:3.5px;background:radial-gradient(ellipse at 50% 45%,#f3f5f9 22%,#d9dee8 52%,#a6b0c2 82%,#8f9ab0 100%);box-shadow:inset 0 0 2.5px 1px rgba(118,130,156,0.85)"><div style="position:absolute;left:3px;top:6px;width:8px;height:2px;background:#76839a"></div><div style="position:absolute;left:6px;top:3px;width:2px;height:8px;background:#76839a"></div></div><div style="position:absolute;left:422px;top:425px;font-size:16.8px;line-height:19px;color:#000;font-weight:normal;white-space:nowrap;">Setup</div><div style="position:absolute;left:401px;top:451px;width:14px;height:14px;border-radius:3.5px;background:radial-gradient(ellipse at 50% 45%,#f3f5f9 22%,#d9dee8 52%,#a6b0c2 82%,#8f9ab0 100%);box-shadow:inset 0 0 2.5px 1px rgba(118,130,156,0.85)"><div style="position:absolute;left:3px;top:6px;width:8px;height:2px;background:#76839a"></div><div style="position:absolute;left:6px;top:3px;width:2px;height:8px;background:#76839a"></div></div><div style="position:absolute;left:422px;top:450px;font-size:16.8px;line-height:19px;color:#000;font-weight:normal;white-space:nowrap;">Student</div><div style="position:absolute;left:401px;top:476px;width:14px;height:14px;border-radius:3.5px;background:radial-gradient(ellipse at 50% 45%,#f3f5f9 22%,#d9dee8 52%,#a6b0c2 82%,#8f9ab0 100%);box-shadow:inset 0 0 2.5px 1px rgba(118,130,156,0.85)"><div style="position:absolute;left:3px;top:6px;width:8px;height:2px;background:#76839a"></div><div style="position:absolute;left:6px;top:3px;width:2px;height:8px;background:#76839a"></div></div><div style="position:absolute;left:422px;top:475px;font-size:16.8px;line-height:19px;color:#000;font-weight:normal;white-space:nowrap;">Pathways</div><div style="position:absolute;left:401px;top:501px;width:14px;height:14px;border-radius:3.5px;background:radial-gradient(ellipse at 50% 45%,#f3f5f9 22%,#d9dee8 52%,#a6b0c2 82%,#8f9ab0 100%);box-shadow:inset 0 0 2.5px 1px rgba(118,130,156,0.85)"><div style="position:absolute;left:3px;top:6px;width:8px;height:2px;background:#76839a"></div></div><div style="position:absolute;left:422px;top:500px;font-size:16.8px;line-height:19px;color:#000;font-weight:normal;white-space:nowrap;">HE</div><div style="position:absolute;left:445px;top:525px;font-size:16.8px;line-height:19px;color:#000;font-weight:normal;white-space:nowrap;">Assessment Types</div><div style="position:absolute;left:445px;top:550px;font-size:16.8px;line-height:19px;color:#000;font-weight:normal;white-space:nowrap;">Certificate Types</div><div style="position:absolute;left:443px;top:571px;width:264px;height:25px;background:#7b96dc;border:1px dotted #6e6238"></div><div style="position:absolute;left:445px;top:575px;font-size:16.8px;line-height:19px;color:#ffffff;font-weight:normal;white-space:nowrap;">Result Codes</div><div style="position:absolute;left:401px;top:601px;width:14px;height:14px;border-radius:3.5px;background:radial-gradient(ellipse at 50% 45%,#f3f5f9 22%,#d9dee8 52%,#a6b0c2 82%,#8f9ab0 100%);box-shadow:inset 0 0 2.5px 1px rgba(118,130,156,0.85)"><div style="position:absolute;left:3px;top:6px;width:8px;height:2px;background:#76839a"></div><div style="position:absolute;left:6px;top:3px;width:2px;height:8px;background:#76839a"></div></div><div style="position:absolute;left:422px;top:600px;font-size:16.8px;line-height:19px;color:#000;font-weight:normal;white-space:nowrap;">Word Templates</div><div style="position:absolute;left:401px;top:626px;width:14px;height:14px;border-radius:3.5px;background:radial-gradient(ellipse at 50% 45%,#f3f5f9 22%,#d9dee8 52%,#a6b0c2 82%,#8f9ab0 100%);box-shadow:inset 0 0 2.5px 1px rgba(118,130,156,0.85)"><div style="position:absolute;left:3px;top:6px;width:8px;height:2px;background:#76839a"></div><div style="position:absolute;left:6px;top:3px;width:2px;height:8px;background:#76839a"></div></div><div style="position:absolute;left:422px;top:625px;font-size:16.8px;line-height:19px;color:#000;font-weight:normal;white-space:nowrap;">Template Flexible Tables</div><div style="position:absolute;left:401px;top:651px;width:14px;height:14px;border-radius:3.5px;background:radial-gradient(ellipse at 50% 45%,#f3f5f9 22%,#d9dee8 52%,#a6b0c2 82%,#8f9ab0 100%);box-shadow:inset 0 0 2.5px 1px rgba(118,130,156,0.85)"><div style="position:absolute;left:3px;top:6px;width:8px;height:2px;background:#76839a"></div><div style="position:absolute;left:6px;top:3px;width:2px;height:8px;background:#76839a"></div></div><div style="position:absolute;left:422px;top:650px;font-size:16.8px;line-height:19px;color:#000;font-weight:normal;white-space:nowrap;">Email Templates</div><div style="position:absolute;left:401px;top:676px;width:14px;height:14px;border-radius:3.5px;background:radial-gradient(ellipse at 50% 45%,#f3f5f9 22%,#d9dee8 52%,#a6b0c2 82%,#8f9ab0 100%);box-shadow:inset 0 0 2.5px 1px rgba(118,130,156,0.85)"><div style="position:absolute;left:3px;top:6px;width:8px;height:2px;background:#76839a"></div><div style="position:absolute;left:6px;top:3px;width:2px;height:8px;background:#76839a"></div></div><div style="position:absolute;left:422px;top:675px;font-size:16.8px;line-height:19px;color:#000;font-weight:normal;white-space:nowrap;">SMS Templates</div><div style="position:absolute;left:709px;top:170px;width:7px;height:1082px;background:#78a3d9;border-radius:2px"></div><div style="position:absolute;left:710px;top:700px;width:3px;height:3px;background:#eef4fc"></div><div style="position:absolute;left:710px;top:706px;width:3px;height:3px;background:#eef4fc"></div><div style="position:absolute;left:710px;top:712px;width:3px;height:3px;background:#eef4fc"></div><div style="position:absolute;left:710px;top:718px;width:3px;height:3px;background:#eef4fc"></div><div style="position:absolute;left:716px;top:170px;width:1267px;height:1082px;background:#e1edfc;border-left:1px solid #b5cff0;border-top:1px solid #b5cff0;border-right:1px solid #b5cff0"></div><div style="position:absolute;left:717px;top:220px;width:1266px;height:2px;background:#a9c8f0"></div><div style="position:absolute;left:729px;top:179px;font-size:29.5px;line-height:34px;color:#15428b;font-weight:bold;white-space:nowrap;">Result Codes</div><div style="position:absolute;left:717px;top:285px;width:1266px;height:3px;background:#a4c0e6"></div><div style="position:absolute;left:726px;top:233px;width:120px;height:38px;background:linear-gradient(#e4eefa 0px,#dde9f6 9px,#a9d0f2 10px,#bcdcf6 22px,#d2ebfb 32px,#c9e5fa 36px);border:2px solid #68a0e6;border-radius:3px;box-shadow:inset 0 0 0 1px rgba(200,230,252,0.7)"></div><div style="position:absolute;left:731px;top:238px;width:110px;height:28px;border:1px dotted #3a2a10"></div><svg style="position:absolute;left:756px;top:240px" width="22" height="25" viewBox="0 0 22 25">
<defs><linearGradient id="dg" x1="0" y1="0" x2="1" y2="1"><stop offset="0" stop-color="#ffffff"/><stop offset="1" stop-color="#e2e2e2"/></linearGradient></defs>
<path d="M1.5 1.5 H14 L19.5 7 V23.5 H1.5 Z" fill="url(#dg)" stroke="#9c9c9c" stroke-width="1.4"/>
<path d="M14 1.5 V7 H19.5" fill="#d8d8d8" stroke="#9c9c9c" stroke-width="1.2"/>
</svg><div style="position:absolute;left:785px;top:243px;font-size:17px;line-height:20px;color:#15428b;font-weight:normal;white-space:nowrap;"><u style="text-underline-offset:2px">N</u>ew</div><div style="position:absolute;left:855px;top:233px;width:120px;height:38px;background:linear-gradient(#e4eefa 0px,#dde9f6 9px,#a9d0f2 10px,#bcdcf6 22px,#d2ebfb 32px,#c9e5fa 36px);border:1px solid #6f9ad6;border-radius:3px;box-shadow:inset 0 0 0 1px rgba(200,230,252,0.7)"></div><svg style="position:absolute;left:877px;top:240px" width="22" height="25" viewBox="0 0 22 25">
<path d="M1.5 1.5 H14 L19.5 7 V23.5 H1.5 Z" fill="#f4f4f4" stroke="#8f8f8f" stroke-width="1.4"/>
<path d="M14 1.5 V7 H19.5" fill="#d8d8d8" stroke="#8f8f8f" stroke-width="1.2"/>
<path d="M4.5 11 L13 21 M13 11 L4.5 21" stroke="#d42020" stroke-width="2.8"/>
</svg><div style="position:absolute;left:905px;top:243px;font-size:17px;line-height:20px;color:#15428b;font-weight:normal;white-space:nowrap;"><u style="text-underline-offset:2px">D</u>elete</div><div style="position:absolute;left:982px;top:243px;font-size:17px;line-height:20px;color:#15428b;font-weight:normal;white-space:nowrap;">Status</div><div style="position:absolute;left:1032px;top:236px;width:131px;height:27px;background:#ffffff;border:1px solid #abc4e4"></div><div style="position:absolute;left:1035px;top:240px;font-size:17px;line-height:20px;color:#000;font-weight:normal;white-space:nowrap;">Active</div><svg style="position:absolute;left:1144px;top:248px" width="9" height="6" viewBox="0 0 9 6"><path d="M0 0 L9 0 L4.5 5 Z" fill="#5577a8"/></svg><div style="position:absolute;left:1722px;top:233px;width:120px;height:38px;background:linear-gradient(#f1f4f9 0px,#ebf0f7 9px,#d1e2f1 10px,#d8e7f4 22px,#e6f0f9 36px);border:1px solid #a3bee2;border-radius:3px"></div><svg style="position:absolute;left:1735px;top:235px;filter:drop-shadow(1.5px 1.5px 0 #ffffff)" width="35" height="33" viewBox="0 0 35 33">
<path d="M11.5 8.5 Q16 12 18.5 16.5 Q21.5 21 25 23.5" stroke="#a9a9a9" stroke-width="5" fill="none" stroke-linecap="round"/>
<path d="M25.5 10.5 Q21 13 18.5 16.5 Q15 21 10 23.5" stroke="#a9a9a9" stroke-width="5" fill="none" stroke-linecap="round"/>
</svg><div style="position:absolute;left:1771px;top:243px;font-size:17px;line-height:20px;color:#8eaad1;font-weight:normal;white-space:nowrap;"><u style="text-underline-offset:2px">C</u>ancel</div><div style="position:absolute;left:1851px;top:233px;width:120px;height:38px;background:linear-gradient(#f1f4f9 0px,#ebf0f7 9px,#d1e2f1 10px,#d8e7f4 22px,#e6f0f9 36px);border:1px solid #a3bee2;border-radius:3px"></div><svg style="position:absolute;left:1877px;top:241px" width="23" height="22" viewBox="0 0 23 22">
<rect x="1" y="1" width="20" height="20" rx="3" fill="#b1b1b1"/>
<rect x="4" y="2" width="14" height="9" fill="#e8e8e8"/>
<rect x="5" y="4" width="12" height="1" fill="#b9b9b9"/><rect x="5" y="6.5" width="12" height="1" fill="#b9b9b9"/>
<rect x="6" y="14" width="10" height="7" fill="#d4d4d4"/><rect x="8" y="16" width="3" height="4" fill="#9d9d9d"/>
</svg><div style="position:absolute;left:1907px;top:243px;font-size:17px;line-height:20px;color:#8eaad1;font-weight:normal;white-space:nowrap;"><u style="text-underline-offset:2px">S</u>ave</div><div style="position:absolute;left:719px;top:288px;width:1264px;height:963px;background:#ffffff;border-left:1px solid #a9c2e4"></div><div style="position:absolute;left:720px;top:289px;width:1260px;height:28px;background:linear-gradient(#ecf3fc,#dfeafa 60%,#d4e4f7);border-bottom:1px solid #a8c2e4"></div><div style="position:absolute;left:1084px;top:289px;width:1px;height:28px;background:#a9c2e4"></div><div style="position:absolute;left:1784px;top:289px;width:1px;height:28px;background:#a9c2e4"></div><div style="position:absolute;left:1980px;top:288px;width:1px;height:963px;background:#a9c0e0"></div><div style="position:absolute;left:1981px;top:288px;width:1px;height:963px;background:#dbe8f9"></div><div style="position:absolute;left:723px;top:294px;font-size:16.8px;line-height:19px;color:#1a4aa0;font-weight:normal;white-space:nowrap;">Code</div><div style="position:absolute;left:1088px;top:294px;font-size:16.8px;line-height:19px;color:#1a4aa0;font-weight:normal;white-space:nowrap;">Name</div><div style="position:absolute;left:1789px;top:294px;font-size:16.8px;line-height:19px;color:#1a4aa0;font-weight:normal;white-space:nowrap;">Status</div><svg style="position:absolute;left:1062px;top:295px" width="13" height="13" viewBox="0 0 13 13"><path d="M6.5 1 L12 12 L1 12 Z" fill="#5b7eae"/></svg><svg style="position:absolute;left:1964px;top:295px" width="11" height="12" viewBox="0 0 11 12"><ellipse cx="5.5" cy="3" rx="4" ry="2" fill="none" stroke="#a5b9d5" stroke-width="1.6"/><path d="M1.8 4 L4.5 7.5 V11 H6.5 V7.5 L9.2 4 Z" fill="#a5b9d5"/></svg><div style="position:absolute;left:720px;top:317px;width:1260px;height:29px;background:#fcf7fe"></div><div style="position:absolute;left:720px;top:346px;width:1260px;height:1px;background:#d3e1f2"></div><div style="position:absolute;left:1084px;top:317px;width:1px;height:30px;background:#d3e1f2"></div><div style="position:absolute;left:1784px;top:317px;width:1px;height:30px;background:#d3e1f2"></div><div style="position:absolute;left:1085px;top:317px;width:895px;height:29px;background:#7b96dc"></div><div style="position:absolute;left:1784px;top:317px;width:1px;height:29px;background:#6f88cc"></div><div style="position:absolute;left:721px;top:323px;font-size:16.8px;line-height:19px;color:#000;font-weight:normal;white-space:nowrap;">C</div><div style="position:absolute;left:1087px;top:323px;font-size:16.8px;line-height:19px;color:#ffffff;font-weight:normal;white-space:nowrap;">Competent</div><div style="position:absolute;left:1875px;top:325px;width:15px;height:15px;background:#dfe9f8;border:2px solid #f4f7fd"></div><svg style="position:absolute;left:1876px;top:326px" width="13" height="13" viewBox="0 0 13 13"><path d="M2.2 6.2 L5.5 10.5 L11 2.2" stroke="#3a6bb4" stroke-width="3" fill="none"/></svg><div style="position:absolute;left:720px;top:347px;width:1260px;height:29px;background:#f2f7fe"></div><div style="position:absolute;left:720px;top:376px;width:1260px;height:1px;background:#d3e1f2"></div><div style="position:absolute;left:1084px;top:347px;width:1px;height:30px;background:#d3e1f2"></div><div style="position:absolute;left:1784px;top:347px;width:1px;height:30px;background:#d3e1f2"></div><div style="position:absolute;left:721px;top:353px;font-size:16.8px;line-height:19px;color:#000;font-weight:normal;white-space:nowrap;">CR</div><div style="position:absolute;left:1087px;top:353px;font-size:16.8px;line-height:19px;color:#000;font-weight:normal;white-space:nowrap;">Credit Transfer</div><div style="position:absolute;left:1874px;top:354px;width:17px;height:17px;background:#e4edf9;border:2px solid #6b9ad7"></div><svg style="position:absolute;left:1876px;top:356px" width="13" height="13" viewBox="0 0 13 13"><path d="M2.2 6.2 L5.5 10.5 L11 2.2" stroke="#3a6bb4" stroke-width="3" fill="none"/></svg><div style="position:absolute;left:720px;top:377px;width:1260px;height:29px;background:#fcf7fe"></div><div style="position:absolute;left:720px;top:406px;width:1260px;height:1px;background:#d3e1f2"></div><div style="position:absolute;left:1084px;top:377px;width:1px;height:30px;background:#d3e1f2"></div><div style="position:absolute;left:1784px;top:377px;width:1px;height:30px;background:#d3e1f2"></div><div style="position:absolute;left:721px;top:383px;font-size:16.8px;line-height:19px;color:#000;font-weight:normal;white-space:nowrap;">NYC</div><div style="position:absolute;left:1087px;top:383px;font-size:16.8px;line-height:19px;color:#000;font-weight:normal;white-space:nowrap;">Not Yet Competent</div><div style="position:absolute;left:1874px;top:384px;width:17px;height:17px;background:#e4edf9;border:2px solid #6b9ad7"></div><svg style="position:absolute;left:1876px;top:386px" width="13" height="13" viewBox="0 0 13 13"><path d="M2.2 6.2 L5.5 10.5 L11 2.2" stroke="#3a6bb4" stroke-width="3" fill="none"/></svg><svg style="position:absolute;left:29.5px;top:530px;overflow:visible;filter:drop-shadow(2px 3px 3px rgba(60,60,70,0.45))" width="40" height="339" viewBox="29.5 530 40 339">
<path d="M47.0 530 L52.0 530 L52.0 858 Q53.5 857 57.0 854.5 L49.5 869 L42.0 854.5 Q45.5 857 47.0 858 Z" fill="#fd3c3e"/>
</svg><div style="position:absolute;left:10px;top:496px;width:108px;height:34px;border:3px solid #fd3c3e;box-shadow:2px 4px 6px rgba(60,60,70,0.35), inset 2px 4px 6px rgba(60,60,70,0.35)"></div><div style="position:absolute;left:49px;top:869px;width:303px;height:40px;border:3px solid #fd3c3e;box-shadow:2px 4px 6px rgba(60,60,70,0.35), inset 2px 4px 6px rgba(60,60,70,0.35)"></div><svg style="position:absolute;left:414px;top:529px;overflow:visible;filter:drop-shadow(2px 3px 3px rgba(60,60,70,0.45))" width="40" height="32" viewBox="414 529 40 32">
<path d="M431.5 529 L436.5 529 L436.5 550 Q438 549 441.5 546.5 L434 561 L426.5 546.5 Q430 549 431.5 550 Z" fill="#fd3c3e"/>
</svg><div style="position:absolute;left:398px;top:492px;width:63px;height:38px;border:3px solid #fd3c3e;box-shadow:2px 4px 6px rgba(60,60,70,0.35), inset 2px 4px 6px rgba(60,60,70,0.35)"></div><div style="position:absolute;left:432px;top:561px;width:282px;height:40px;border:3px solid #fd3c3e;box-shadow:2px 4px 6px rgba(60,60,70,0.35), inset 2px 4px 6px rgba(60,60,70,0.35)"></div>
</body></html>
